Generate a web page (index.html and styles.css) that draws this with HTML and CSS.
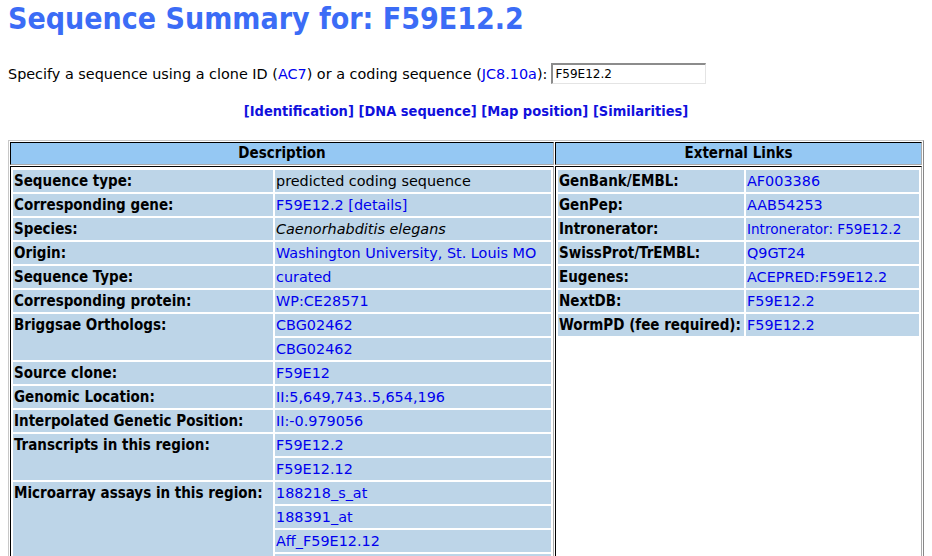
FILE: index.html
```html
<!DOCTYPE html>
<html>
<head>
<meta charset="utf-8">
<title>Sequence Summary for: F59E12.2</title>
<link rel="stylesheet" href="styles.css">
</head>
<body>
<h1 class="title">Sequence Summary for: F59E12.2</h1>
<form class="search">
  <span>Specify a sequence using a clone ID (<a href="#">AC7</a>) or a coding sequence (<a href="#">JC8.10a</a>):</span>
  <input class="search-input" type="text" value="F59E12.2">
</form>
<p class="nav">
  <a href="#">[Identification]</a> <a href="#">[DNA sequence]</a> <a href="#">[Map position]</a> <a href="#">[Similarities]</a>
</p>
<table class="outer">
  <tr>
    <th class="head head-desc">Description</th>
    <th class="head head-links">External Links</th>
  </tr>
  <tr>
    <td class="panel">
      <table class="info">
        <tr><th>Sequence type:</th><td>predicted coding sequence</td></tr>
        <tr><th>Corresponding gene:</th><td><a href="#">F59E12.2 [details]</a></td></tr>
        <tr><th>Species:</th><td><i>Caenorhabditis elegans</i></td></tr>
        <tr><th>Origin:</th><td><a href="#">Washington University, St. Louis MO</a></td></tr>
        <tr><th>Sequence Type:</th><td><a href="#">curated</a></td></tr>
        <tr><th>Corresponding protein:</th><td><a href="#">WP:CE28571</a></td></tr>
        <tr><th rowspan="2">Briggsae Orthologs:</th><td><a href="#">CBG02462</a></td></tr>
        <tr><td><a href="#">CBG02462</a></td></tr>
        <tr><th>Source clone:</th><td><a href="#">F59E12</a></td></tr>
        <tr><th>Genomic Location:</th><td><a href="#">II:5,649,743..5,654,196</a></td></tr>
        <tr><th>Interpolated Genetic Position:</th><td><a href="#">II:-0.979056</a></td></tr>
        <tr><th rowspan="2">Transcripts in this region:</th><td><a href="#">F59E12.2</a></td></tr>
        <tr><td><a href="#">F59E12.12</a></td></tr>
        <tr><th rowspan="4">Microarray assays in this region:</th><td><a href="#">188218_s_at</a></td></tr>
        <tr><td><a href="#">188391_at</a></td></tr>
        <tr><td><a href="#">Aff_F59E12.12</a></td></tr>
        <tr><td>&nbsp;</td></tr>
      </table>
    </td>
    <td class="panel">
      <table class="info info-links">
        <tr><th>GenBank/EMBL:</th><td><a href="#">AF003386</a></td></tr>
        <tr><th>GenPep:</th><td><a href="#">AAB54253</a></td></tr>
        <tr><th>Intronerator:</th><td><a href="#" class="small">Intronerator: F59E12.2</a></td></tr>
        <tr><th>SwissProt/TrEMBL:</th><td><a href="#">Q9GT24</a></td></tr>
        <tr><th>Eugenes:</th><td><a href="#">ACEPRED:F59E12.2</a></td></tr>
        <tr><th>NextDB:</th><td><a href="#">F59E12.2</a></td></tr>
        <tr><th>WormPD (fee required):</th><td><a href="#">F59E12.2</a></td></tr>
      </table>
    </td>
  </tr>
</table>
</body>
</html>
```

FILE: styles.css
```css
body {
  margin: 0 8px 8px;
  font-family: "DejaVu Sans", sans-serif;
  font-size: 14.4px;
  color: #000;
  background: #fff;
}
a {
  color: #0000ee;
  text-decoration: none;
}
.title,
.nav,
.head,
.info th {
  font-family: "DejaVu Sans Condensed", "DejaVu Sans", sans-serif;
  font-stretch: condensed;
}
.title {
  margin: 1px 0 0;
  font-size: 30px;
  line-height: 35px;
  font-weight: bold;
  color: #3b6cf6;
}
.search {
  margin: 27px 0 0;
  display: flex;
  align-items: center;
  gap: 4px;
}
.search-input {
  width: 148px;
  height: 18px;
  padding: 0 2px;
  font-family: "DejaVu Sans", sans-serif;
  font-size: 12px;
  border-style: solid;
  border-width: 2px 1px 1px 2px;
  border-color: #8c8c8c #e4e4e4 #e4e4e4 #8c8c8c;
}
.nav {
  margin: 19px 0 0;
  line-height: 17px;
  text-align: center;
  font-size: 14.5px;
  font-weight: bold;
}
.nav a {
  color: #1010dd;
}
.outer {
  margin-top: 20px;
  width: 100%;
  border-collapse: separate;
  border-spacing: 1px;
  border: 1px solid;
  border-color: #c8c8c8 #888 #888 #c8c8c8;
}
.head {
  background: #95c8f3;
  font-size: 15px;
  font-weight: bold;
  padding: 1px 2px 2px;
  line-height: 18px;
  border: 1px solid;
  border-color: #000 #aaa #aaa #000;
}
.head-desc {
  width: 538px;
}
.panel {
  vertical-align: top;
  padding: 1px 0 0;
  border: 1px solid;
  border-color: #000 #aaa #aaa #000;
}
.info {
  border-collapse: separate;
  border-spacing: 2px;
  width: 100%;
}
.info th,
.info td {
  background: #bdd5e8;
  text-align: left;
  vertical-align: top;
  padding: 2px 1px 1px;
  line-height: 19px;
  white-space: nowrap;
}
.info th {
  font-size: 15px;
  font-weight: bold;
  width: 258px;
}
.info-links th {
  width: 184px;
}
.small {
  font-size: 13.6px;
}
```
